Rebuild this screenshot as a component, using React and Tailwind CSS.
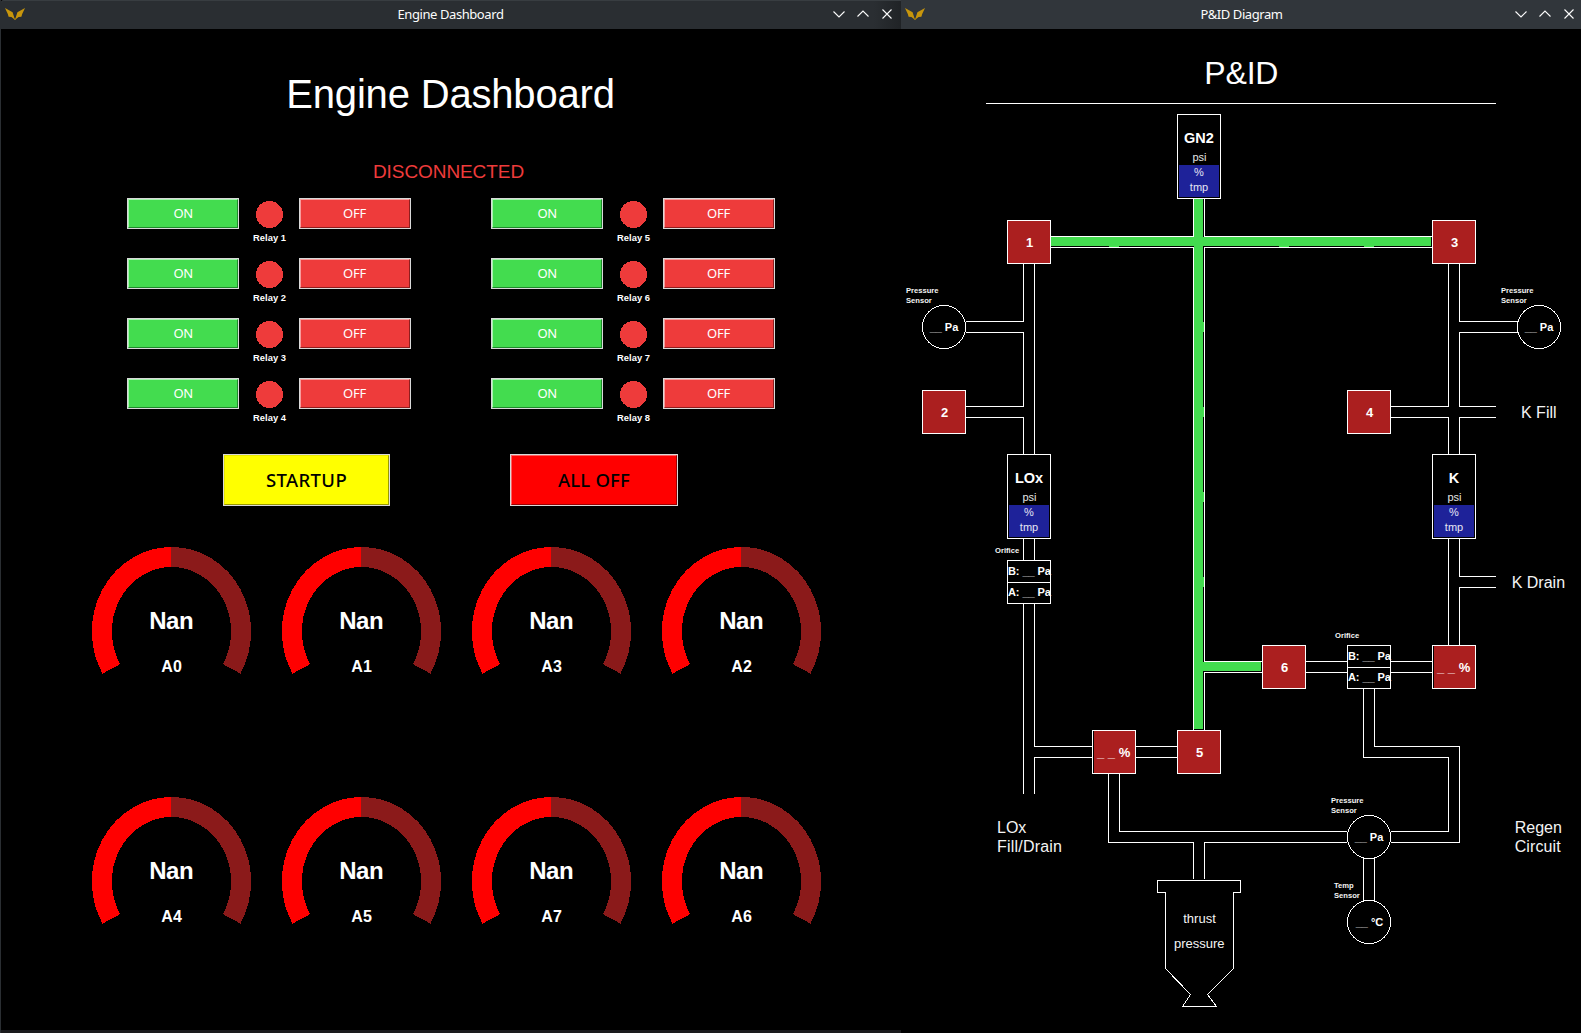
const SANS = 'font-["Liberation_Sans",Arial,sans-serif]';

function Logo() {
  return (
    <svg width="20" height="12" viewBox="0 0 20 12" className="mb-px" aria-hidden="true">
      <path d="M0 0 L7.6 4.2 L9.4 10 L9 11 L6.4 8.9 L3.6 8.8 L2.8 6 Z" fill="#c8960c" />
      <path d="M20 0 L12.4 4.2 L10.6 10 L11 11 L13.6 8.9 L16.4 8.8 L17.2 6 Z" fill="#c8960c" />
      <path d="M8.4 9.4 L10 10.4 L11.6 9.4 L10.6 12 H9.4 Z" fill="#a67d10" />
    </svg>
  );
}

function WindowControls() {
  return (
    <svg
      width="60"
      height="12"
      viewBox="0 0 60 12"
      fill="none"
      stroke="#fcfcfc"
      strokeWidth="1.1"
      aria-hidden="true"
      className="mb-px"
    >
      <path d="M0.5 3.5 L6 9 L11.5 3.5" />
      <path d="M24.5 8.5 L30 3 L35.5 8.5" />
      <path d="M49.5 1.5 L58.5 10.5 M58.5 1.5 L49.5 10.5" />
    </svg>
  );
}

function TitleBar({ title, className }) {
  return (
    <header
      className={`grid h-[29px] shrink-0 grid-cols-[1fr_auto_1fr] items-center pl-1 text-[#fcfcfc] ${className}`}
    >
      <Logo />
      <span className='pl-[3px] font-["Noto_Sans",sans-serif] text-[13px] leading-none tracking-[-0.42px]'>
        {title}
      </span>
      <span className="justify-self-end">
        <WindowControls />
      </span>
    </header>
  );
}

function ReliefButton({ label, tone, size }) {
  return (
    <button
      className={`border border-[#d9d9d9] p-0 font-["Noto_Sans",sans-serif] ${size}`}
    >
      <span className={`flex h-full w-full items-center justify-center border ${tone}`}>
        {label}
      </span>
    </button>
  );
}

const GREEN = "border-t-[#a5f5ae] border-l-[#a5f5ae] border-r-[#1f8a2c] border-b-[#1f8a2c] bg-[#43dc4f] pl-px text-white text-[13px] tracking-[-0.6px]";
const RED = "border-t-[#f89c9c] border-l-[#f89c9c] border-r-[#8f1d1d] border-b-[#8f1d1d] bg-[#ee3b3b] text-white text-[13px] tracking-[-0.2px]";
const YELLOW = "border-t-[#e8e800] border-l-[#e8e800] border-r-[#999900] border-b-[#999900] bg-[#ffff00] pb-px text-black text-[18.5px] font-medium tracking-[0.4px]";
const BRIGHT_RED = "border-t-[#ff6060] border-l-[#ff6060] border-r-[#990000] border-b-[#990000] bg-[#ff0000] pb-px text-black text-[18.5px] font-medium tracking-[0.2px]";

function Relay({ n }) {
  return (
    <div className="flex h-[60px] items-start">
      <ReliefButton label="ON" tone={GREEN} size="h-[31px] w-[112px]" />
      <div className="flex w-[60px] flex-col items-center pt-[3px] pl-[1px]">
        <svg width="27" height="27" shapeRendering="crispEdges" aria-hidden="true">
          <circle cx="13.5" cy="13.5" r="13.5" fill="#ee3b3b" />
        </svg>
        <span className="mt-[4px] ml-[1px] whitespace-nowrap text-[9.4px] font-bold leading-[11px]">
          Relay {n}
        </span>
      </div>
      <ReliefButton label="OFF" tone={RED} size="h-[31px] w-[112px]" />
    </div>
  );
}

function Gauge({ name }) {
  return (
    <svg width="190" height="250" viewBox="0 0 190 250" className={SANS}>
      <g fill="none" strokeWidth="20" shapeRendering="crispEdges">
        <path d="M35.3 131.9 A69.5 74.5 0 0 1 95 20" stroke="#ff0000" />
        <path d="M95 20 A69.5 74.5 0 0 1 155.7 131.9" stroke="#8b1a1a" />
      </g>
      <text
        x="95.2"
        y="92"
        textAnchor="middle"
        fill="#fff"
        className="text-[24px] font-bold tracking-[-0.4px]"
      >
        Nan
      </text>
      <text x="95.6" y="135" textAnchor="middle" fill="#fff" className="text-[16px] font-bold">
        {name}
      </text>
    </svg>
  );
}

function EngineDashboard() {
  return (
    <section className="flex w-[901px] flex-col border-l border-[#2a2e32] bg-black">
      <TitleBar
        title="Engine Dashboard"
        className="rounded-tl-[3px] bg-linear-to-r from-[#2a2e32] from-97% to-[#202326] pr-2 shadow-[inset_0_1px_0_#383d41]"
      />
      <main
        className={`flex min-h-0 flex-1 flex-col items-center overflow-hidden text-white ${SANS}`}
      >
        <h1 className="mt-[42px] mr-px text-[40px] leading-[46px] tracking-[-0.18px]">
          Engine Dashboard
        </h1>
        <p className="mt-[44px] mr-[5px] text-[19px] leading-[22px] tracking-[-0.08px] text-[#ee3b3b]">
          DISCONNECTED
        </p>
        <div className="mt-[15px] mr-[1px] flex gap-[80px]">
          {[[1, 2, 3, 4], [5, 6, 7, 8]].map((column) => (
            <div key={column[0]}>
              {column.map((n) => (
                <Relay key={n} n={n} />
              ))}
            </div>
          ))}
        </div>
        <div className="mt-[16px] mr-[1px] flex gap-[120px]">
          <ReliefButton label="STARTUP" tone={YELLOW} size="h-[52px] w-[167px]" />
          <ReliefButton label="ALL OFF" tone={BRIGHT_RED} size="h-[52px] w-[168px]" />
        </div>
        <div className="mt-[31px] mr-[-10px] grid shrink-0 grid-cols-4">
          {["A0", "A1", "A3", "A2", "A4", "A5", "A7", "A6"].map((name) => (
            <Gauge key={name} name={name} />
          ))}
        </div>
      </main>
      <div className="h-[3px] shrink-0 bg-[#1a1a1d]" />
    </section>
  );
}

/* ---- P&ID diagram, drawn in screen coordinates ---- */

const PIPES = [
  "M1051 236.5 H1193.5 V199", "M1432 236.5 H1204.5 V199",
  "M1051 247.5 H1193.5 V730", "M1432 247.5 H1204.5 V661.5 H1262",
  "M1262 672.5 H1204.5 V730",
  "M1034.5 264 V454", "M1023.5 264 V321.5 H966", "M966 332.5 H1023.5 V406.5 H966",
  "M966 417.5 H1023.5 V454",
  "M1023.5 539 V560 M1034.5 539 V560",
  "M1023.5 604 V794", "M1034.5 604 V746.5 H1092", "M1092 757.5 H1034.5 V794",
  "M1136 746.5 H1177 M1136 757.5 H1177",
  "M1119.5 774 V831.5 H1347", "M1108.5 774 V842.5 H1193.5 V879",
  "M1347 842.5 H1204.5 V879",
  "M1363.5 858 V901 M1374.5 858 V901",
  "M1391 831.5 H1448.5 V757.5 H1363.5 V689",
  "M1391 842.5 H1459.5 V746.5 H1374.5 V689",
  "M1306 661.5 H1347 M1306 672.5 H1347 M1391 661.5 H1432 M1391 672.5 H1432",
  "M1448.5 264 V406.5 H1391", "M1391 417.5 H1448.5 V454",
  "M1459.5 264 V321.5 H1518", "M1518 332.5 H1459.5 V406.5 H1496",
  "M1496 417.5 H1459.5 V454",
  "M1448.5 539 V645", "M1459.5 539 V576.5 H1496", "M1496 587.5 H1459.5 V645",
];

const FLOW = [
  [1051, 237, 380, 9], [1194, 199, 9, 530], [1203, 662, 58, 9],
  [1109, 246, 10, 1], [1279, 246, 10, 1], [1364, 246, 10, 1],
  [1203, 322, 1, 10], [1203, 407, 1, 10], [1203, 492, 1, 10], [1203, 577, 1, 10],
];

function Valve({ x, y, label }) {
  return (
    <g>
      <rect x={x + 0.5} y={y + 0.5} width="43" height="43" fill="#ab1f1f" stroke="#fff" />
      <text x={x + 22.7} y={y + 27} textAnchor="middle" className="text-[13px] font-bold">
        {label}
      </text>
    </g>
  );
}

function ThrottleValve({ x, y }) {
  return (
    <g>
      <rect x={x + 0.5} y={y + 0.5} width="43" height="43" fill="#000" stroke="#fff" />
      <rect x={x + 2} y={y + 1} width="41" height="42" fill="#ab1f1f" />
      <text x={x + 5} y={y + 27} className="text-[13px] font-bold">
        <tspan fill="#f4dcdc">_ _ </tspan>%
      </text>
    </g>
  );
}

function Tank({ x, y, label }) {
  return (
    <g textAnchor="middle" className="text-[11px]">
      <rect x={x + 0.5} y={y + 0.5} width="43" height="84" fill="#000" stroke="#fff" />
      <rect x={x + 2} y={y + 51} width="40" height="32" fill="#1e2299" />
      <text x={x + 22} y={y + 29} className="text-[14.5px] font-bold">{label}</text>
      <text x={x + 22.5} y={y + 47} fill="#e6e6e6">psi</text>
      <text x={x + 22} y={y + 62} fill="#e6e6f4">%</text>
      <text x={x + 22} y={y + 77} fill="#e6e6f4">tmp</text>
    </g>
  );
}

function Reading({ x, y, prefix = "", unit }) {
  return (
    <text x={x} y={y} className="text-[11px] font-bold tracking-[-0.05px]">
      {prefix}
      <tspan fill="#dcdcdc">__</tspan> {unit}
    </text>
  );
}

function Orifice({ x, y }) {
  return (
    <g className="font-bold">
      <rect x={x + 0.5} y={y + 0.5} width="43" height="43" fill="#000" stroke="#fff" />
      <path d={`M${x} ${y + 22.5} h44`} stroke="#fff" />
      <Reading x={x + 0.9} y={y + 15} prefix="B: " unit="Pa" />
      <Reading x={x + 0.9} y={y + 36} prefix="A: " unit="Pa" />
      <text x={x - 11.9} y={y - 7} fill="#f4f4f4" className="text-[7.6px]">Orifice</text>
    </g>
  );
}

function Sensor({ x, y, unit, dx = 7.7, label, labelX, labelY }) {
  return (
    <g className="font-bold">
      <circle cx={x + 22} cy={y + 22} r="21.5" fill="#000" stroke="#fff" shapeRendering="crispEdges" />
      <Reading x={x + dx} y={y + 26} unit={unit} />
      <text x={labelX} y={labelY} fill="#f4f4f4" className="text-[7.6px]">{label}</text>
      <text x={labelX} y={labelY + 10} fill="#f4f4f4" className="text-[7.6px]">Sensor</text>
    </g>
  );
}

function Diagram() {
  return (
    <svg width="680" height="1004" viewBox="901 29 680 1004" fill="#fff" className={`block ${SANS}`}>
      <text x="1241.3" y="84" textAnchor="middle" className="text-[32px] tracking-[-0.2px]">P&amp;ID</text>
      <path d="M986 103.5 H1496" stroke="#fff" />

      <g fill="none" stroke="#fff" shapeRendering="crispEdges">
        {PIPES.map((d) => (
          <path key={d} d={d} />
        ))}
      </g>
      <g fill="#43dc4f" shapeRendering="crispEdges">
        {FLOW.map(([x, y, w, h]) => (
          <rect key={`${x}-${y}`} x={x} y={y} width={w} height={h} />
        ))}
      </g>

      <Tank x={1177} y={114} label="GN2" />
      <Tank x={1007} y={454} label="LOx" />
      <Tank x={1432} y={454} label="K" />

      <Valve x={1007} y={220} label="1" />
      <Valve x={922} y={390} label="2" />
      <Valve x={1432} y={220} label="3" />
      <Valve x={1347} y={390} label="4" />
      <Valve x={1177} y={730} label="5" />
      <Valve x={1262} y={645} label="6" />
      <ThrottleValve x={1092} y={730} />
      <ThrottleValve x={1432} y={645} />

      <Orifice x={1007} y={560} />
      <Orifice x={1347} y={645} />

      <Sensor x={922} y={305} unit="Pa" label="Pressure" labelX={906} labelY={293} />
      <Sensor x={1517} y={305} unit="Pa" label="Pressure" labelX={1501} labelY={293} />
      <Sensor x={1347} y={815} unit="Pa" label="Pressure" labelX={1331} labelY={803} />
      <Sensor x={1347} y={900} unit="°C" dx={8.8} label="Temp" labelX={1334} labelY={888} />

      <g fill="#f4f4f4" className="text-[16px]">
        <text x="1521" y="418">K Fill</text>
        <text x="1511.7" y="588">K Drain</text>
        <text x="997" y="833">LOx</text>
        <text x="997" y="852" className="tracking-[0.2px]">Fill/Drain</text>
        <text x="1514.7" y="833">Regen</text>
        <text x="1514.7" y="852" className="tracking-[0.1px]">Circuit</text>
      </g>

      <path
        d="M1157.5 880.5 H1240.5 V892.5 H1233.5 V968.5 L1207.5 994.5 L1216.5 1006.5 H1182.5 L1190.5 994.5 L1165.5 968.5 V892.5 H1157.5 Z"
        fill="#000"
        stroke="#fff"
        shapeRendering="crispEdges"
      />
      <g textAnchor="middle" fill="#f4f4f4" className="text-[13px]">
        <text x="1199.5" y="923">thrust</text>
        <text x="1199.2" y="948">pressure</text>
      </g>
    </svg>
  );
}

function PidWindow() {
  return (
    <section className="flex flex-1 flex-col bg-black text-white">
      <TitleBar title="P&ID Diagram" className="bg-[#31363b] pr-1.5" />
      <Diagram />
    </section>
  );
}

export default function App() {
  return (
    <div className="flex h-[1033px] w-[1581px] overflow-hidden bg-black">
      <EngineDashboard />
      <PidWindow />
    </div>
  );
}
